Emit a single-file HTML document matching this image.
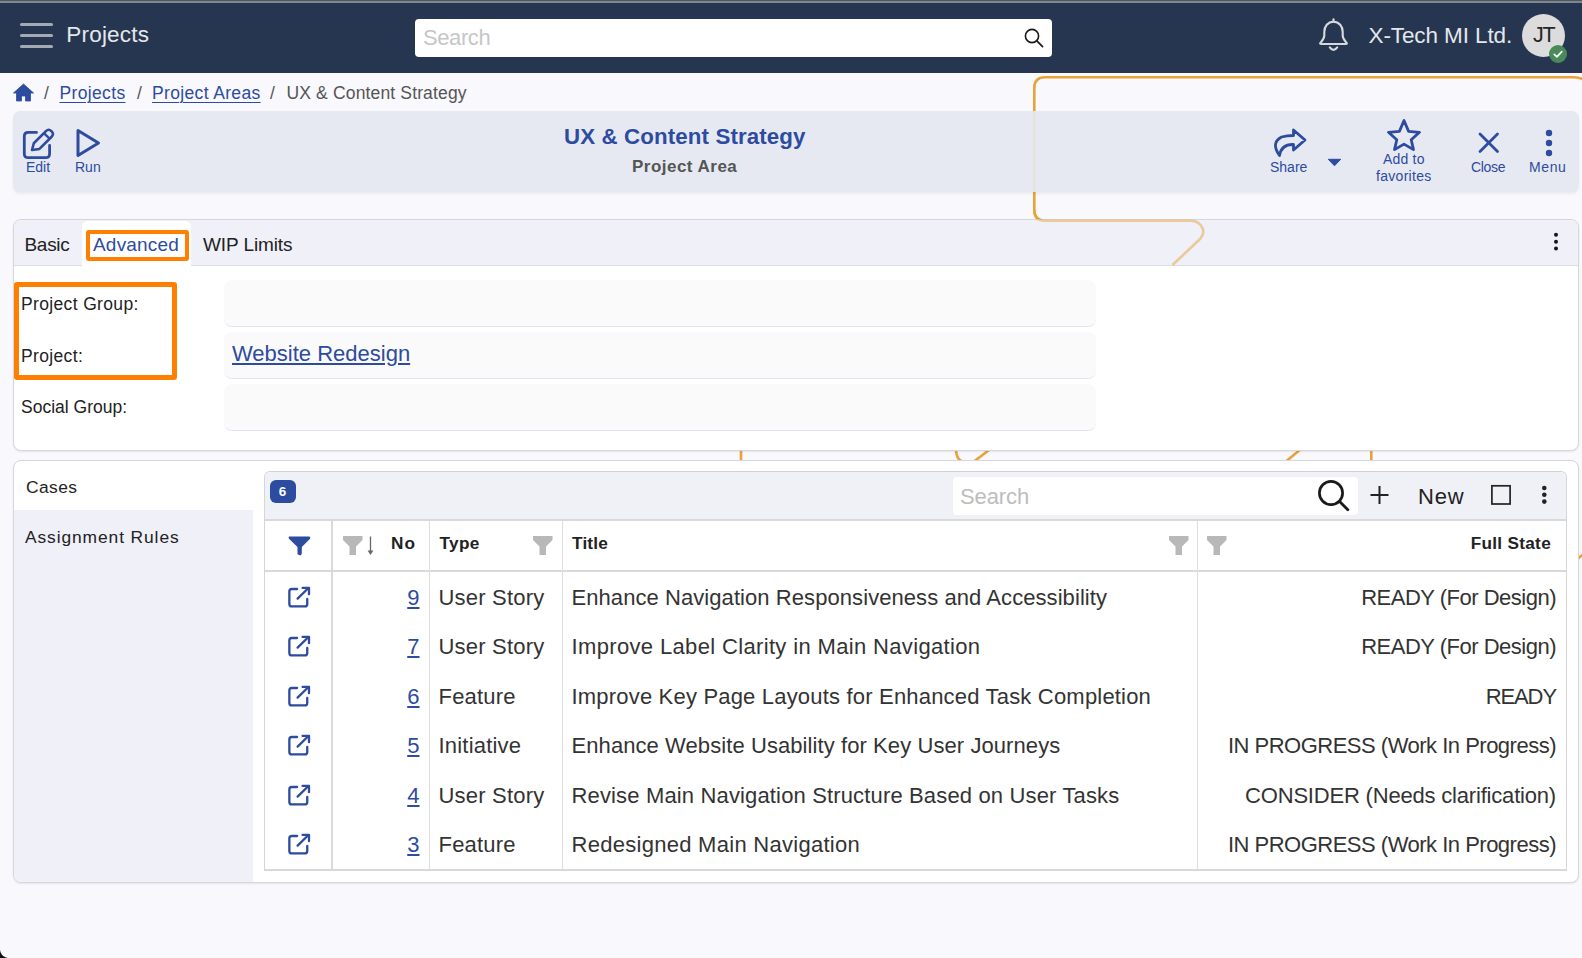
<!DOCTYPE html>
<html><head><meta charset="utf-8">
<style>
html,body{margin:0;padding:0;}
body{width:1582px;height:958px;overflow:hidden;position:relative;background:#f8f8fd;font-family:"Liberation Sans",sans-serif;color:#222;}
.a{position:absolute;}
.t{position:absolute;line-height:1;white-space:nowrap;}
.topstrip{left:0;top:0;width:1582px;height:3px;background:linear-gradient(#4b5660 0,#4b5660 1px,#7e868e 1px,#7e868e 3px);}
.hdr{left:0;top:3px;width:1582px;height:70px;background:#263650;}
.ham{left:20px;width:33px;height:3px;border-radius:2px;background:#a3aab4;}
.sbox{left:415px;top:19px;width:637px;height:38px;background:#fff;border-radius:4px;}
.blue{color:#2d4b9f;}
.lnk{color:#2d4b9f;text-decoration:underline;text-decoration-thickness:1px;text-underline-offset:3px;}
.panel{background:#e6e9f2;border-radius:7px;box-shadow:0 2px 3px rgba(0,0,0,0.06);}
.tlabel{font-size:14px;color:#2d4b9f;}
</style></head>
<body>
<!-- decorative orange path behind -->
<svg class="a" style="left:0;top:0" width="1582" height="958">
  <g fill="none" stroke="#e8a23a" stroke-width="2.6">
  <path d="M1586 82 Q1582 77.2 1574 77.2 H1045 Q1034.3 77.2 1034.3 88 V210 Q1034.3 220.7 1045 220.7 H1191 Q1199 220.7 1202.5 228 Q1205 234 1199 240 L1160 278"/>
  <path d="M741 440 V470"/>
  <path d="M955.5 440 Q955.5 454 958 458 Q960 461 963 462"/>
  <path d="M972 463 L993 447"/>
  <path d="M1285 462.3 L1303 447.2"/>
  <path d="M1371.3 440 V470"/>
  <path d="M1576 560 L1590 549"/>
  </g>
</svg>

<div class="a topstrip"></div>
<div class="a hdr"></div>
<div class="a ham" style="top:23px"></div>
<div class="a ham" style="top:34px"></div>
<div class="a ham" style="top:45px"></div>
<div class="t" style="left:66.3px;top:24px;font-size:22.5px;color:#e4e7eb;letter-spacing:0.2px">Projects</div>
<div class="a sbox"></div>
<div class="t" style="left:423px;top:27px;font-size:22px;color:#c6c6c6;letter-spacing:-0.4px">Search</div>
<svg class="a" style="left:1020px;top:24px" width="30" height="30"><circle cx="12" cy="12" r="6.6" fill="none" stroke="#1a1a1a" stroke-width="1.6"/><path d="M16.8 16.8 L22.6 22.6" stroke="#1a1a1a" stroke-width="1.7" stroke-linecap="round"/></svg>
<!-- bell -->
<svg class="a" style="left:1314px;top:16px" width="40" height="40">
  <path d="M19.5 5.7 C13.8 5.7 10.3 10.5 10.3 16 V19.5 C10.3 22.5 8.7 24.3 6.9 26.2 Q5 28 7.6 28 H31.4 Q34 28 32.1 26.2 C30.3 24.3 28.7 22.5 28.7 19.5 V16 C28.7 10.5 25.2 5.7 19.5 5.7 Z" fill="none" stroke="#d6dade" stroke-width="2.1" stroke-linejoin="round"/>
  <path d="M19.5 3.2 V5.5" stroke="#d6dade" stroke-width="2.1" stroke-linecap="round"/>
  <path d="M15.8 31.3 Q19.5 36.5 23.2 31.3" fill="none" stroke="#d6dade" stroke-width="2.1" stroke-linecap="round"/>
</svg>
<div class="t" style="left:1368.5px;top:24.5px;font-size:22.5px;color:#e4e7eb;letter-spacing:-0.1px">X-Tech MI Ltd.</div>
<div class="a" style="left:1522px;top:14px;width:43px;height:43px;border-radius:50%;background:#dcdcdc;"></div>
<div class="t" style="left:1533px;top:24.7px;font-size:21.5px;color:#262626;letter-spacing:-1.3px">JT</div>
<div class="a" style="left:1549px;top:45px;width:18px;height:18px;border-radius:50%;background:#4a8a59;"></div>
<svg class="a" style="left:1549px;top:45px" width="18" height="18"><path d="M5.3 9.3 L7.9 11.8 L12.8 6.6" fill="none" stroke="#fff" stroke-width="1.7" stroke-linecap="round" stroke-linejoin="round"/></svg>

<!-- breadcrumb -->
<svg class="a" style="left:13px;top:83px" width="21" height="19"><path d="M10.5 1 L20.5 10 H17.5 V18 H12.5 V13 H8.5 V18 H3.5 V10 H0.5 Z" fill="#2d4b9f" stroke="#2d4b9f" stroke-width="0.8" stroke-linejoin="round"/></svg>
<div class="t" style="left:44px;top:85px;font-size:17.5px;color:#555;">/</div>
<div class="t lnk" style="left:59.5px;top:85px;font-size:17.5px;letter-spacing:0.35px">Projects</div>
<div class="t" style="left:137px;top:85px;font-size:17.5px;color:#555;">/</div>
<div class="t lnk" style="left:152px;top:85px;font-size:17.5px;letter-spacing:0.35px">Project Areas</div>
<div class="t" style="left:270px;top:85px;font-size:17.5px;color:#555;">/</div>
<div class="t" style="left:286.5px;top:85px;font-size:17.5px;color:#555;letter-spacing:0.15px">UX &amp; Content Strategy</div>


<!-- toolbar panel -->
<div class="a panel" style="left:13px;top:111px;width:1566px;height:81px;"></div>
<svg class="a" style="left:0;top:100px" width="120" height="100">
  <path d="M36.5 32.4 H28.3 Q24.3 32.4 24.3 36.4 V53.7 Q24.3 57.7 28.3 57.7 H45.6 Q49.6 57.7 49.6 53.7 V45.5" fill="none" stroke="#2d4b9f" stroke-width="2.8" stroke-linecap="round"/>
  <path d="M32 50 L33.8 43.25 L45.95 31.1 Q48.65 28.4 51.35 31.1 L51.62 31.37 Q54.32 34.07 51.62 36.77 L39.47 48.92 Z" fill="none" stroke="#2d4b9f" stroke-width="2.6" stroke-linejoin="round"/>
  <path d="M43.97 33.08 L49.64 38.75" stroke="#2d4b9f" stroke-width="2.4"/>
  <path d="M78 30.5 L98.5 43 L78 55.5 Z" fill="none" stroke="#2d4b9f" stroke-width="3" stroke-linejoin="round"/>
</svg>
<div class="t tlabel" style="left:26px;top:159.5px;">Edit</div>
<div class="t tlabel" style="left:75px;top:159.5px;">Run</div>
<div class="t" style="left:564px;top:126px;font-size:22.3px;font-weight:700;color:#2d4b9f;letter-spacing:0.12px">UX &amp; Content Strategy</div>
<div class="t" style="left:632px;top:157.8px;font-size:17px;font-weight:700;color:#555;letter-spacing:0.48px">Project Area</div>
<svg class="a" style="left:1260px;top:110px" width="330" height="85">
  <!-- share -->
  <path d="M33.5 20 L45 30 L33.5 40 V34.5 Q21.5 34 19.5 45.5 Q10.5 33 21.5 27 Q27 25.5 33.5 25.5 Z" fill="none" stroke="#2d4b9f" stroke-width="2.8" stroke-linejoin="round"/>
  <!-- caret -->
  <path d="M68.3 49.3 H80.7 L74.5 55.8 Z" fill="#2d4b9f" stroke="#2d4b9f" stroke-width="1" stroke-linejoin="round"/>
  <!-- star -->
  <path d="M144 10.5 L148.6 21.4 L159.5 22.3 L151.2 29.8 L153.5 39.6 L144 34.1 L134.5 39.6 L136.8 29.8 L128.5 22.3 L139.4 21.4 Z" fill="none" stroke="#2d4b9f" stroke-width="2.8" stroke-linejoin="round"/>
  <!-- close -->
  <path d="M220 24 L237.5 41.5 M237.5 24 L220 41.5" stroke="#2d4b9f" stroke-width="2.8" stroke-linecap="round"/>
  <!-- menu dots -->
  <circle cx="289" cy="23" r="3.2" fill="#2d4b9f"/><circle cx="289" cy="33" r="3.2" fill="#2d4b9f"/><circle cx="289" cy="43" r="3.2" fill="#2d4b9f"/>
</svg>
<div class="t tlabel" style="left:1270px;top:160px;">Share</div>
<div class="t tlabel" style="left:1383px;top:151.5px;letter-spacing:0.2px">Add to</div>
<div class="t tlabel" style="left:1376px;top:168.5px;letter-spacing:0.3px">favorites</div>
<div class="t tlabel" style="left:1471px;top:160px;letter-spacing:-0.3px">Close</div>
<div class="t tlabel" style="left:1529px;top:159.5px;letter-spacing:0.6px">Menu</div>

<!-- tabs panel -->
<div class="a" style="left:13px;top:219px;width:1564px;height:230px;border:1px solid #d5d6de;border-radius:8px;background:#fff;box-shadow:0 1px 2px rgba(0,0,0,0.08);overflow:hidden;">
  <div class="a" style="left:0;top:0;width:1564px;height:45px;background:#eff0f8;border-bottom:1px solid #dcdde6;"></div>
  <div class="a" style="left:68px;top:1px;width:109px;height:45px;background:#fff;border-radius:6px 6px 0 0;"></div>
</div>
<div class="a" style="left:86px;top:230px;width:95px;height:22.5px;border:4.5px solid #ff7f00;border-radius:3px;"></div>
<div class="t" style="left:24.5px;top:235px;font-size:19px;color:#222;letter-spacing:-0.3px">Basic</div>
<div class="t" style="left:93px;top:235px;font-size:19px;color:#2d4b9f;letter-spacing:0.2px">Advanced</div>
<div class="t" style="left:203px;top:235px;font-size:19px;color:#222;letter-spacing:-0.1px">WIP Limits</div>
<svg class="a" style="left:1546px;top:228px" width="20" height="28"><circle cx="10" cy="6.7" r="2" fill="#151515"/><circle cx="10" cy="13.7" r="2" fill="#151515"/><circle cx="10" cy="20.6" r="2" fill="#151515"/></svg>


<svg class="a" style="left:1000px;top:100px" width="240" height="200">
  <path d="M34.3 11 V92" fill="none" stroke="#e8a23a" stroke-width="2.6" opacity="0.1"/>
  <path d="M34.3 110 Q34.3 120.7 45 120.7 H191 Q199 120.7 202.5 128 Q205 134 199 140 L172.5 165" fill="none" stroke="#e8a23a" stroke-width="2.6" opacity="0.5"/>
</svg>
<!-- form -->
<div class="a" style="left:14px;top:282px;width:153px;height:88px;border:5px solid #ff7f00;border-radius:3px;"></div>
<div class="t" style="left:21px;top:295.5px;font-size:17.5px;color:#222;letter-spacing:0.35px">Project Group:</div>
<div class="t" style="left:21px;top:347.5px;font-size:17.5px;color:#222;letter-spacing:0.35px">Project:</div>
<div class="t" style="left:21px;top:399px;font-size:17.5px;color:#222;letter-spacing:0px">Social Group:</div>
<div class="a" style="left:224px;top:280px;width:872px;height:45.5px;background:#fafafb;border-bottom:1px solid #e2e4f0;border-radius:8px;"></div>
<div class="a" style="left:224px;top:332px;width:872px;height:45.5px;background:#fafafb;border-bottom:1px solid #e2e4f0;border-radius:8px;"></div>
<div class="a" style="left:224px;top:383.5px;width:872px;height:46px;background:#fafafb;border-bottom:1px solid #e2e4f0;border-radius:8px;"></div>
<div class="t lnk" style="left:232px;top:343px;font-size:22px;text-underline-offset:2px;text-decoration-thickness:1.7px">Website Redesign</div>


<!-- cases panel -->
<div class="a" style="left:13px;top:460px;width:1564px;height:421px;border:1px solid #d5d6de;border-radius:8px;background:#fff;box-shadow:0 1px 2px rgba(0,0,0,0.08);overflow:hidden;">
  <div class="a" style="left:0;top:49px;width:239px;height:372px;background:#eff0f8;"></div>
</div>
<div class="t" style="left:26px;top:479px;font-size:17.4px;color:#222;letter-spacing:0.4px">Cases</div>
<div class="t" style="left:25px;top:528.5px;font-size:17.4px;color:#222;letter-spacing:0.9px">Assignment Rules</div>

<!-- table -->
<div class="a" style="left:264px;top:471px;width:1301px;height:398px;border:1px solid #d6d6d6;border-top-color:#d0d0d6;border-radius:6px 6px 0 0;background:#fff;"></div>
<div class="a" style="left:265px;top:472px;width:1301px;height:47px;background:#f0f1f7;border-radius:6px 6px 0 0;"></div>
<div class="a" style="left:270px;top:480px;width:26px;height:23px;border-radius:6px;background:#2d4b9f;"></div>
<div class="t" style="left:269.5px;top:485px;width:26px;text-align:center;font-size:13.5px;font-weight:700;color:#fff;">6</div>
<div class="a" style="left:953px;top:477px;width:405px;height:38px;background:#fff;border-radius:4px;"></div>
<div class="t" style="left:960px;top:486px;font-size:22px;color:#bdbdbd;letter-spacing:-0.1px">Search</div>
<svg class="a" style="left:1310px;top:475px" width="260" height="42">
  <circle cx="21" cy="18" r="11.6" fill="none" stroke="#1a1a1a" stroke-width="2.7"/>
  <path d="M29.6 26.6 L37.8 34.8" stroke="#1a1a1a" stroke-width="2.8" stroke-linecap="round"/>
  <path d="M69.5 11 V29 M60.5 20 H78.5" stroke="#222" stroke-width="2"/>
  <rect x="181.9" y="10.8" width="18.2" height="18.2" fill="none" stroke="#222" stroke-width="1.7"/>
  <circle cx="234.3" cy="13" r="2.3" fill="#222"/><circle cx="234.3" cy="19.8" r="2.3" fill="#222"/><circle cx="234.3" cy="26.6" r="2.3" fill="#222"/>
</svg>
<div class="t" style="left:1418px;top:485.5px;font-size:22px;color:#222;letter-spacing:0.8px">New</div>
<!-- header row -->
<div class="a" style="left:265px;top:519px;width:1301px;height:2px;background:#d9d9d9;"></div>
<div class="a" style="left:265px;top:570px;width:1301px;height:2px;background:#d9d9d9;"></div>
<div class="a" style="left:331px;top:521px;width:2px;height:349px;background:#d9d9d9;"></div>
<div class="a" style="left:429px;top:521px;width:1px;height:349px;background:#dedede;"></div>
<div class="a" style="left:562px;top:521px;width:1px;height:349px;background:#dedede;"></div>
<div class="a" style="left:1197px;top:521px;width:1px;height:349px;background:#dedede;"></div>
<div class="a" style="left:265px;top:869px;width:1301px;height:2px;background:#d9d9d9;"></div>
<svg class="a" style="left:288px;top:536px" width="23" height="20"><path d="M1 0.5 H21.5 Q23 1.5 21.8 3 L13.8 11 V17.2 Q13.8 18.8 12.3 19.5 L9.5 18.2 V11 L1.2 3 Q0 1.5 1 0.5 Z" fill="#2d4b9f"/></svg>
<svg class="a" style="left:343px;top:536px" width="20" height="19"><path d="M0 0 H19.5 V4 L13 10.5 V19 H6.5 V10.5 L0 4 Z" fill="#b8b8b8"/></svg>
<svg class="a" style="left:364px;top:535px" width="14" height="22"><path d="M6.5 1.5 V17" stroke="#666" stroke-width="1.3"/><path d="M3.6 15.5 H9.4 L6.5 20 Z" fill="#666"/></svg>
<div class="t" style="left:391px;top:534.5px;font-size:17.2px;font-weight:700;color:#222;letter-spacing:1px">No</div>
<div class="t" style="left:439.5px;top:534.5px;font-size:17.2px;font-weight:700;color:#222;letter-spacing:0.3px">Type</div>
<svg class="a" style="left:533px;top:536px" width="20" height="19"><path d="M0 0 H19.5 V4 L13 10.5 V19 H6.5 V10.5 L0 4 Z" fill="#b8b8b8"/></svg>
<div class="t" style="left:572px;top:534.5px;font-size:17.2px;font-weight:700;color:#222;letter-spacing:0.2px">Title</div>
<svg class="a" style="left:1169px;top:536px" width="20" height="19"><path d="M0 0 H19.5 V4 L13 10.5 V19 H6.5 V10.5 L0 4 Z" fill="#b8b8b8"/></svg><svg class="a" style="left:1207px;top:536px" width="20" height="19"><path d="M0 0 H19.5 V4 L13 10.5 V19 H6.5 V10.5 L0 4 Z" fill="#b8b8b8"/></svg>
<div class="t" style="left:1370px;top:534.5px;width:181px;text-align:right;font-size:17.2px;font-weight:700;color:#222;letter-spacing:0.3px">Full State</div>
<svg class="a" style="left:286px;top:585.8px" width="26" height="24"><path d="M11.1 3 H5.85 Q3.35 3 3.35 5.5 V17.95 Q3.35 20.45 5.85 20.45 H18.75 Q21.25 20.45 21.25 17.95 V12.9" fill="none" stroke="#2d4b9f" stroke-width="2.3" stroke-linecap="round"/><path d="M11.6 12.6 L22.2 2.2" stroke="#2d4b9f" stroke-width="2.3" stroke-linecap="round"/><path d="M16.6 1.9 H23 V8.2" fill="none" stroke="#2d4b9f" stroke-width="2.3" stroke-linecap="round" stroke-linejoin="round"/></svg>
<div class="t lnk" style="left:339.5px;top:586.6px;width:80px;text-align:right;font-size:22px;text-underline-offset:2px;text-decoration-thickness:1.7px">9</div>
<div class="t" style="left:438.5px;top:586.6px;font-size:22px;color:#333;letter-spacing:0.2px">User Story</div>
<div class="t" style="left:571.5px;top:586.6px;font-size:22px;color:#333;letter-spacing:0.07px">Enhance Navigation Responsiveness and Accessibility</div>
<div class="t" style="left:1150px;top:586.6px;width:406px;text-align:right;font-size:22px;color:#333;letter-spacing:-0.5px">READY (For Design)</div>
<svg class="a" style="left:286px;top:635.3px" width="26" height="24"><path d="M11.1 3 H5.85 Q3.35 3 3.35 5.5 V17.95 Q3.35 20.45 5.85 20.45 H18.75 Q21.25 20.45 21.25 17.95 V12.9" fill="none" stroke="#2d4b9f" stroke-width="2.3" stroke-linecap="round"/><path d="M11.6 12.6 L22.2 2.2" stroke="#2d4b9f" stroke-width="2.3" stroke-linecap="round"/><path d="M16.6 1.9 H23 V8.2" fill="none" stroke="#2d4b9f" stroke-width="2.3" stroke-linecap="round" stroke-linejoin="round"/></svg>
<div class="t lnk" style="left:339.5px;top:636.1px;width:80px;text-align:right;font-size:22px;text-underline-offset:2px;text-decoration-thickness:1.7px">7</div>
<div class="t" style="left:438.5px;top:636.1px;font-size:22px;color:#333;letter-spacing:0.2px">User Story</div>
<div class="t" style="left:571.5px;top:636.1px;font-size:22px;color:#333;letter-spacing:0.35px">Improve Label Clarity in Main Navigation</div>
<div class="t" style="left:1150px;top:636.1px;width:406px;text-align:right;font-size:22px;color:#333;letter-spacing:-0.5px">READY (For Design)</div>
<svg class="a" style="left:286px;top:684.8px" width="26" height="24"><path d="M11.1 3 H5.85 Q3.35 3 3.35 5.5 V17.95 Q3.35 20.45 5.85 20.45 H18.75 Q21.25 20.45 21.25 17.95 V12.9" fill="none" stroke="#2d4b9f" stroke-width="2.3" stroke-linecap="round"/><path d="M11.6 12.6 L22.2 2.2" stroke="#2d4b9f" stroke-width="2.3" stroke-linecap="round"/><path d="M16.6 1.9 H23 V8.2" fill="none" stroke="#2d4b9f" stroke-width="2.3" stroke-linecap="round" stroke-linejoin="round"/></svg>
<div class="t lnk" style="left:339.5px;top:685.6px;width:80px;text-align:right;font-size:22px;text-underline-offset:2px;text-decoration-thickness:1.7px">6</div>
<div class="t" style="left:438.5px;top:685.6px;font-size:22px;color:#333;letter-spacing:0.2px">Feature</div>
<div class="t" style="left:571.5px;top:685.6px;font-size:22px;color:#333;letter-spacing:0.19px">Improve Key Page Layouts for Enhanced Task Completion</div>
<div class="t" style="left:1150px;top:685.6px;width:406px;text-align:right;font-size:22px;color:#333;letter-spacing:-1.1px">READY</div>
<svg class="a" style="left:286px;top:734.3px" width="26" height="24"><path d="M11.1 3 H5.85 Q3.35 3 3.35 5.5 V17.95 Q3.35 20.45 5.85 20.45 H18.75 Q21.25 20.45 21.25 17.95 V12.9" fill="none" stroke="#2d4b9f" stroke-width="2.3" stroke-linecap="round"/><path d="M11.6 12.6 L22.2 2.2" stroke="#2d4b9f" stroke-width="2.3" stroke-linecap="round"/><path d="M16.6 1.9 H23 V8.2" fill="none" stroke="#2d4b9f" stroke-width="2.3" stroke-linecap="round" stroke-linejoin="round"/></svg>
<div class="t lnk" style="left:339.5px;top:735.1px;width:80px;text-align:right;font-size:22px;text-underline-offset:2px;text-decoration-thickness:1.7px">5</div>
<div class="t" style="left:438.5px;top:735.1px;font-size:22px;color:#333;letter-spacing:0.2px">Initiative</div>
<div class="t" style="left:571.5px;top:735.1px;font-size:22px;color:#333;letter-spacing:0.08px">Enhance Website Usability for Key User Journeys</div>
<div class="t" style="left:1150px;top:735.1px;width:406px;text-align:right;font-size:22px;color:#333;letter-spacing:-0.5px">IN PROGRESS (Work In Progress)</div>
<svg class="a" style="left:286px;top:783.8px" width="26" height="24"><path d="M11.1 3 H5.85 Q3.35 3 3.35 5.5 V17.95 Q3.35 20.45 5.85 20.45 H18.75 Q21.25 20.45 21.25 17.95 V12.9" fill="none" stroke="#2d4b9f" stroke-width="2.3" stroke-linecap="round"/><path d="M11.6 12.6 L22.2 2.2" stroke="#2d4b9f" stroke-width="2.3" stroke-linecap="round"/><path d="M16.6 1.9 H23 V8.2" fill="none" stroke="#2d4b9f" stroke-width="2.3" stroke-linecap="round" stroke-linejoin="round"/></svg>
<div class="t lnk" style="left:339.5px;top:784.6px;width:80px;text-align:right;font-size:22px;text-underline-offset:2px;text-decoration-thickness:1.7px">4</div>
<div class="t" style="left:438.5px;top:784.6px;font-size:22px;color:#333;letter-spacing:0.2px">User Story</div>
<div class="t" style="left:571.5px;top:784.6px;font-size:22px;color:#333;letter-spacing:0.15px">Revise Main Navigation Structure Based on User Tasks</div>
<div class="t" style="left:1150px;top:784.6px;width:406px;text-align:right;font-size:22px;color:#333;letter-spacing:-0.19px">CONSIDER (Needs clarification)</div>
<svg class="a" style="left:286px;top:833.3px" width="26" height="24"><path d="M11.1 3 H5.85 Q3.35 3 3.35 5.5 V17.95 Q3.35 20.45 5.85 20.45 H18.75 Q21.25 20.45 21.25 17.95 V12.9" fill="none" stroke="#2d4b9f" stroke-width="2.3" stroke-linecap="round"/><path d="M11.6 12.6 L22.2 2.2" stroke="#2d4b9f" stroke-width="2.3" stroke-linecap="round"/><path d="M16.6 1.9 H23 V8.2" fill="none" stroke="#2d4b9f" stroke-width="2.3" stroke-linecap="round" stroke-linejoin="round"/></svg>
<div class="t lnk" style="left:339.5px;top:834.1px;width:80px;text-align:right;font-size:22px;text-underline-offset:2px;text-decoration-thickness:1.7px">3</div>
<div class="t" style="left:438.5px;top:834.1px;font-size:22px;color:#333;letter-spacing:0.2px">Feature</div>
<div class="t" style="left:571.5px;top:834.1px;font-size:22px;color:#333;letter-spacing:0.28px">Redesigned Main Navigation</div>
<div class="t" style="left:1150px;top:834.1px;width:406px;text-align:right;font-size:22px;color:#333;letter-spacing:-0.5px">IN PROGRESS (Work In Progress)</div>
<div class="a" style="left:0;top:949px;width:9px;height:9px;background:radial-gradient(circle at 9px 0, transparent 8.5px, #111 9.5px);"></div>

</body></html>
